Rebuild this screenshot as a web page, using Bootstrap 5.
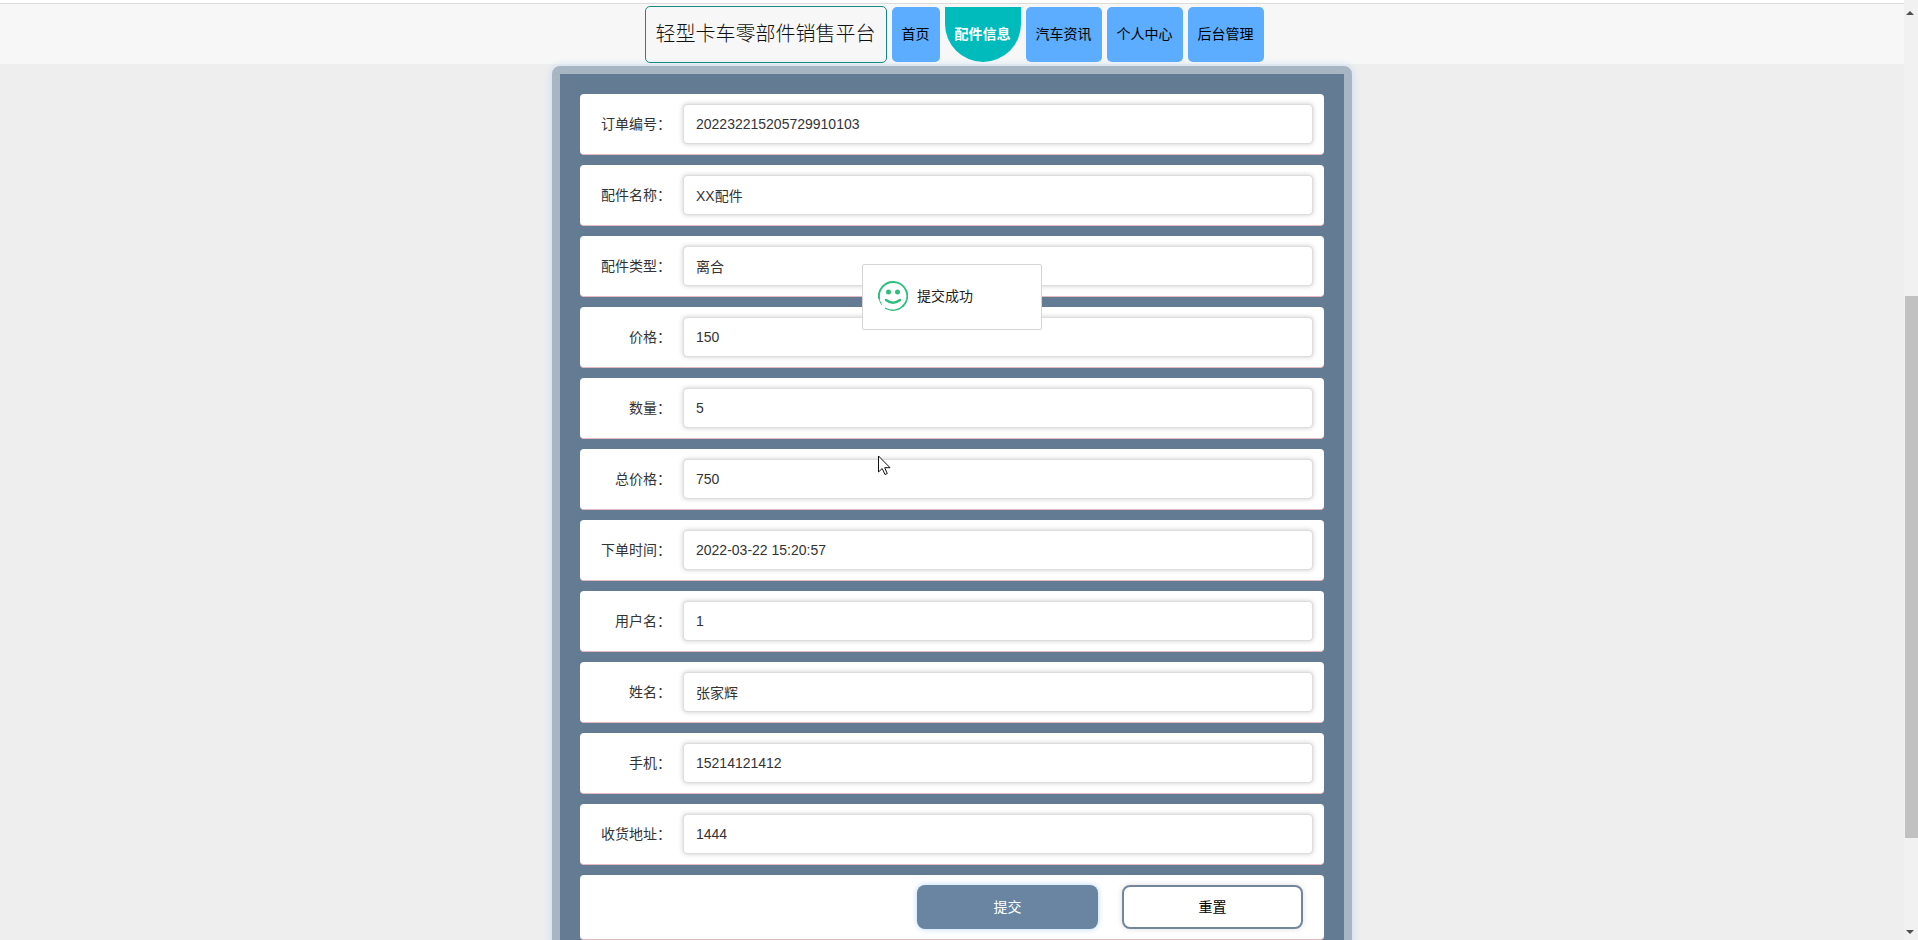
<!DOCTYPE html>
<html lang="zh-CN">
<head>
<meta charset="utf-8">
<meta name="viewport" content="width=device-width, initial-scale=1">
<title>轻型卡车零部件销售平台</title>
<link href="https://cdn.jsdelivr.net/npm/bootstrap@5.3.0/dist/css/bootstrap.min.css" rel="stylesheet">
<style>
  body { font: 400 14px/20px "Liberation Sans", "Noto Sans CJK SC", sans-serif; color: #333; background: #eee; }
  .top-strip { height: 4px; background: #fff; border-bottom: 1px solid #dcdcdc; }
  .site-bar { height: 60px; gap: 5px; padding: 0 0 0 4px; background: #f7f7f7; }
  .site-title { height: 57px; padding: 0 10px; border: 1px solid #17897f; border-radius: 5px; font-size: 20px; font-weight: 300; color: #111; }
  .site-link { height: 55px; padding: 0 10px; border-radius: 5px; background: #5cadff; color: #000; }
  .site-link.active { border-radius: 0 0 38px 38px; background: #00bbbb; color: #fff; font-weight: 700; }
  .order-form { max-width: 800px; margin: 2px auto 0; padding: 20px; border: 8px solid #a8b5c3; border-radius: 8px; background: #647b94; box-shadow: 0 0 8px #c4dcf2; gap: 10px; }
  .order-row { padding: 10px 11px 10px 10px; background: #fff; border-bottom: 1px solid #e5b9c1; border-radius: 4px; }
  .order-row label { width: 81px; margin-right: 12px; text-align: right; }
  .order-row .form-control { height: 40px; padding: 0 12px; border: 1px solid #ddd; border-radius: 4px; font: inherit; color: #333; box-shadow: 0 0 5px #ccc; }
  .order-actions { gap: 24px; padding-right: 21px; }
  .order-actions .btn { width: 181px; height: 44px; border-radius: 8px; font: inherit; }
  .btn-send { background: #6985a2; color: #fff; box-shadow: 0 0 6px #b8d8f5; }
  .btn-clear { border: 2px solid #74879a; background: #fff; color: #000; box-shadow: 0 0 6px #ddd; }
  .notice { top: 264px; left: 50%; width: 180px; height: 66px; margin-left: -90px; padding: 0 15px 2px; gap: 9px; border: 1px solid #d3d4d3; border-radius: 2px; background: #fff; color: #222; }
  .pointer { top: 455px; left: 878px; }
  .scroll-rail { width: 14px; background: #f1f1f1; }
  .scroll-top { height: 31.5%; padding-top: 11px; }
  .scroll-thumb { height: 57.6%; width: 13px; background: #c1c1c1; }
  .scroll-end { padding-bottom: 6px; }
</style>
</head>
<body class="vh-100 overflow-hidden d-flex">
<div class="flex-grow-1 vh-100 overflow-hidden position-relative">
  <div class="top-strip"></div>
  <nav class="site-bar d-flex align-items-center justify-content-center">
    <a href="#" class="site-title d-flex align-items-center text-decoration-none">轻型卡车零部件销售平台</a>
    <a href="#" class="site-link d-flex align-items-center text-decoration-none">首页</a>
    <a href="#" class="site-link active d-flex align-items-center text-decoration-none" aria-current="page">配件信息</a>
    <a href="#" class="site-link d-flex align-items-center text-decoration-none">汽车资讯</a>
    <a href="#" class="site-link d-flex align-items-center text-decoration-none">个人中心</a>
    <a href="#" class="site-link d-flex align-items-center text-decoration-none">后台管理</a>
  </nav>
  <form class="order-form d-flex flex-column">
    <div class="order-row d-flex align-items-center"><label class="flex-shrink-0" for="orderNo">订单编号：</label><input class="form-control" id="orderNo" value="202232215205729910103"></div>
    <div class="order-row d-flex align-items-center"><label class="flex-shrink-0" for="partName">配件名称：</label><input class="form-control" id="partName" value="XX配件"></div>
    <div class="order-row d-flex align-items-center"><label class="flex-shrink-0" for="partType">配件类型：</label><input class="form-control" id="partType" value="离合"></div>
    <div class="order-row d-flex align-items-center"><label class="flex-shrink-0" for="price">价格：</label><input class="form-control" id="price" value="150"></div>
    <div class="order-row d-flex align-items-center"><label class="flex-shrink-0" for="amount">数量：</label><input class="form-control" id="amount" value="5"></div>
    <div class="order-row d-flex align-items-center"><label class="flex-shrink-0" for="total">总价格：</label><input class="form-control" id="total" value="750"></div>
    <div class="order-row d-flex align-items-center"><label class="flex-shrink-0" for="orderTime">下单时间：</label><input class="form-control" id="orderTime" value="2022-03-22 15:20:57"></div>
    <div class="order-row d-flex align-items-center"><label class="flex-shrink-0" for="userName">用户名：</label><input class="form-control" id="userName" value="1"></div>
    <div class="order-row d-flex align-items-center"><label class="flex-shrink-0" for="fullName">姓名：</label><input class="form-control" id="fullName" value="张家辉"></div>
    <div class="order-row d-flex align-items-center"><label class="flex-shrink-0" for="phone">手机：</label><input class="form-control" id="phone" value="15214121412"></div>
    <div class="order-row d-flex align-items-center"><label class="flex-shrink-0" for="address">收货地址：</label><input class="form-control" id="address" value="1444"></div>
    <div class="order-row order-actions d-flex justify-content-end">
      <button type="button" class="btn btn-send">提交</button>
      <button type="reset" class="btn btn-clear">重置</button>
    </div>
  </form>
  <div class="notice position-absolute d-flex align-items-center" role="status">
    <svg width="30" height="30" viewBox="0 0 30 30" fill="none" stroke="#2dbf7c" stroke-linecap="round" aria-hidden="true">
      <path d="M3.500 23.500A14.200 14.200 0 0 1 4 6" stroke-width="1"/>
      <path d="M1 17A14.200 14.200 0 0 1 15 1A14 14 0 0 1 25 25" stroke-width="2"/>
      <path d="M25 25A14.200 14.200 0 0 1 7.500 27.200" stroke-width="1.300"/>
      <path d="M8 19Q15 24.500 22 19" stroke-width="2.400"/>
      <circle cx="10.500" cy="11" r="2.500" fill="#2dbf7c" stroke="none"/>
      <circle cx="19.500" cy="11" r="2.500" fill="#2dbf7c" stroke="none"/>
    </svg>
    <span>提交成功</span>
  </div>
  <svg class="pointer position-absolute" width="13" height="21" viewBox="0 0 13 21" aria-hidden="true"><path d="M.5 1V17L4.200 13.500L7 19.500L9.300 18.500L6.700 12.700H12Z" fill="#fff" stroke="#111" stroke-width="1"/></svg>
</div>
<div class="scroll-rail vh-100 flex-shrink-0 d-flex flex-column align-items-end" aria-hidden="true">
  <div class="scroll-top flex-shrink-0 pe-1"><svg class="d-block" width="8" height="4" viewBox="0 0 8 4"><path d="M0 4L4 0L8 4Z" fill="#505050"/></svg></div>
  <div class="scroll-thumb flex-shrink-0"></div>
  <div class="scroll-end mt-auto pe-1"><svg class="d-block" width="8" height="4" viewBox="0 0 8 4"><path d="M0 0L4 4L8 0Z" fill="#505050"/></svg></div>
</div>
<script src="https://cdn.jsdelivr.net/npm/bootstrap@5.3.0/dist/js/bootstrap.bundle.min.js"></script>
</body>
</html>
